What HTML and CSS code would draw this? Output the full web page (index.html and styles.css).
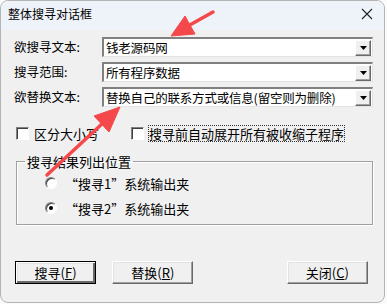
FILE: index.html
```html
<!DOCTYPE html>
<html lang="zh">
<head>
<meta charset="utf-8">
<link rel="stylesheet" href="styles.css">
</head>
<body>
<div class="win">
  <div class="titlebar">
    <span class="title">整体搜寻对话框</span>
    <svg class="close" width="12" height="12" viewBox="0 0 12 12"><path d="M1 1 L11 11 M11 1 L1 11" stroke="#222" stroke-width="1.1" fill="none"/></svg>
  </div>
  <div class="content">
    <div class="row">
      <span class="lbl">欲搜寻文本:</span>
      <div class="combo"><span class="val">钱老源码网</span><span class="dd"><svg width="7" height="4" viewBox="0 0 7 4"><path d="M0 0 H7 L3.5 4 Z" fill="#000"/></svg></span></div>
    </div>
    <div class="row">
      <span class="lbl">搜寻范围:</span>
      <div class="combo"><span class="val">所有程序数据</span><span class="dd"><svg width="7" height="4" viewBox="0 0 7 4"><path d="M0 0 H7 L3.5 4 Z" fill="#000"/></svg></span></div>
    </div>
    <div class="row">
      <span class="lbl">欲替换文本:</span>
      <div class="combo"><span class="val">替换自己的联系方式或信息(留空则为删除)</span><span class="dd"><svg width="7" height="4" viewBox="0 0 7 4"><path d="M0 0 H7 L3.5 4 Z" fill="#000"/></svg></span></div>
    </div>
    <div class="checks">
      <div class="chk"><span class="box"></span><span class="ctext">区分大小写</span></div>
      <div class="chk chk2"><span class="box"></span><span class="ctext focus">搜寻前自动展开所有被收缩子程序</span></div>
    </div>
    <fieldset class="group">
      <legend>搜寻结果列出位置</legend>
      <div class="radio"><span class="rb"></span><span>“搜寻1”系统输出夹</span></div>
      <div class="radio"><span class="rb on"></span><span>“搜寻2”系统输出夹</span></div>
    </fieldset>
    <div class="buttons">
      <div class="btn def">搜寻(<u>F</u>)</div>
      <div class="btn">替换(<u>R</u>)</div>
      <div class="spacer"></div>
      <div class="btn">关闭(<u>C</u>)</div>
    </div>
  </div>
  <svg class="annot" width="387" height="304" viewBox="0 0 387 304">
    <g stroke="#f4484b" stroke-width="3.5" stroke-linecap="round" fill="#f4484b">
      <line x1="213" y1="12" x2="188" y2="26"/>
      <line x1="47" y1="175" x2="104" y2="122"/>
    </g>
    <g fill="#f4484b" stroke="#f4484b" stroke-linejoin="round" stroke-width="1">
      <polygon points="171,36 195,34 185,16"/>
      <polygon points="120,107 109,132 94,116"/>
    </g>
  </svg>
</div>
</body>
</html>
```

FILE: styles.css
```css
* { box-sizing: border-box; }
html, body { margin: 0; padding: 0; }
body {
  width: 387px;
  height: 304px;
  background: #fafafa;
  font-family: "Noto Sans CJK SC", "DejaVu Sans", sans-serif;
  font-size: 13px;
  color: #000;
  overflow: hidden;
}
.win {
  position: relative;
  width: 385px;
  height: 303px;
  background: #f0f0f0;
  border: 1px solid #b4b4b4;
  border-radius: 8px;
  overflow: hidden;
}
.titlebar {
  height: 29px;
  background: #eef2f9;
  display: flex;
  align-items: center;
  padding: 0 0 3px 7px;
}
.title {
  font-size: 12px;
  flex: 1;
  line-height: 14px;
}
.close { margin-right: 11px; }
.content {
  padding: 7px 0 0 13px;
  display: flex;
  flex-direction: column;
}
.row {
  display: flex;
  align-items: center;
  height: 20px;
  margin-bottom: 5px;
}
.lbl {
  width: 88px;
  line-height: 16px;
  font-size: 12.5px;
}
.combo {
  width: 271px;
  height: 20px;
  background: #fff;
  border-top: 2px solid #808080;
  border-left: 2px solid #808080;
  border-bottom: 1px solid #e3e3e3;
  border-right: 1px solid #e3e3e3;
  display: flex;
  align-items: center;
  padding-left: 2px;
}
.val {
  flex: 1;
  line-height: 15px;
  white-space: nowrap;
  font-size: 12.5px;
  letter-spacing: -0.2px;
}
.dd {
  width: 16px;
  height: 16px;
  background: #f0f0f0;
  border: 1px solid;
  border-color: #fff #696969 #696969 #fff;
  box-shadow: inset -1px -1px #a0a0a0;
  display: flex;
  align-items: center;
  justify-content: center;
  margin-right: 1px;
  flex: none;
}
.checks {
  display: flex;
  margin-top: 14px;
  height: 15px;
  align-items: center;
}
.chk {
  display: flex;
  align-items: center;
  width: 115px;
}
.chk2 { width: auto; }
.box {
  width: 13px;
  height: 13px;
  background: #fff;
  border: 1px solid;
  border-color: #808080 #fff #fff #808080;
  box-shadow: inset 1px 1px #404040;
  margin: 0 5px 0 2px;
}
.ctext { line-height: 15px; }
.focus { outline: 1px dotted #333; outline-offset: 0; }
.group {
  margin: 13px 0 0 2px;
  width: 357px;
  height: 71px;
  padding: 5px 0 0 28px;
  border: 1px solid #a0a0a0;
  box-shadow: 1px 1px 0 #fff, inset 1px 1px 0 #fff;
}
legend {
  padding: 0 2px;
  margin-left: -20px;
  line-height: 15px;
}
.radio {
  display: flex;
  align-items: center;
  height: 18px;
  margin-bottom: 7px;
}
.rb {
  width: 12px;
  height: 12px;
  border-radius: 50%;
  background: #fff;
  border: 1px solid;
  border-color: #808080 #fff #fff #808080;
  box-shadow: inset 1px 1px #404040;
  margin-right: 8px;
  position: relative;
}
.rb.on::after {
  content: "";
  position: absolute;
  left: 3px;
  top: 3px;
  width: 4px;
  height: 4px;
  border-radius: 50%;
  background: #000;
}
.buttons {
  display: flex;
  margin-top: 36px;
  padding-left: 1px;
}
.btn {
  width: 83px;
  height: 23px;
  display: flex;
  align-items: center;
  justify-content: center;
  background: #f0f0f0;
  border: 1px solid;
  border-color: #fff #696969 #696969 #fff;
  box-shadow: inset -1px -1px #a0a0a0, inset 1px 1px #e3e3e3;
  margin-right: 16px;
  line-height: 15px;
}
.btn.def {
  border: 1px solid #000;
  box-shadow: inset 1px 1px #fff, inset -2px -2px #696969, inset 2px 2px #e3e3e3;
}
.btn u { text-decoration: underline; }
.spacer { width: 79px; }
.annot {
  position: absolute;
  left: -1px;
  top: -1px;
  pointer-events: none;
}
```
